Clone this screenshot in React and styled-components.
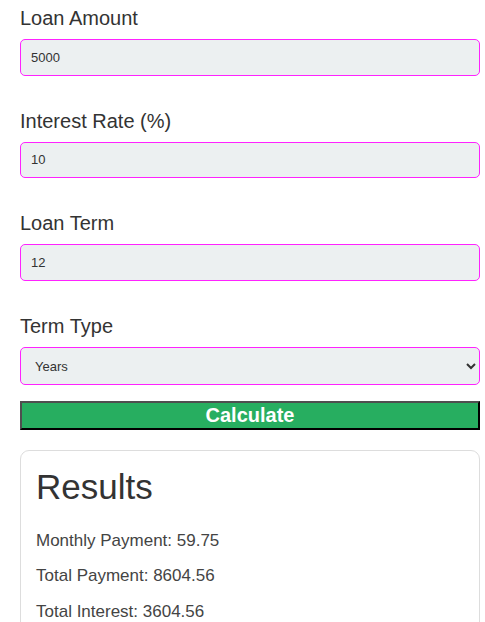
import React, { useState } from "react";
import styled, { createGlobalStyle } from "styled-components";

const Global = createGlobalStyle`
  html, body { margin: 0; padding: 0; background: #ffffff; }
  body { font-family: "Liberation Sans", Arial, sans-serif; }
  * { box-sizing: border-box; }
`;

const Page = styled.div`
  width: 460px;
  margin-left: 20px;
  padding-top: 7px;
`;

const Form = styled.div`
  display: flex;
  flex-direction: column;
  gap: 34px;
`;

const Field = styled.div`
  display: flex;
  flex-direction: column;
  gap: 9px;
`;

const Label = styled.label`
  font-size: 20px;
  line-height: 23px;
  color: #333333;
`;

const Input = styled.input`
  width: 100%;
  height: 36.5px;
  padding: 10px;
  font-family: "Liberation Sans", Arial, sans-serif;
  font-size: 13px;
  color: #333333;
  background: #ecf0f1;
  border: 1px solid #ff22ff;
  border-radius: 5px;
  outline: none;
`;

const Select = styled.select`
  width: 100%;
  height: 38px;
  padding: 10px;
  font-family: "Liberation Sans", Arial, sans-serif;
  font-size: 13px;
  color: #333333;
  background: #ecf0f1;
  border: 1px solid #ff22ff;
  border-radius: 5px;
  outline: none;
`;

const Button = styled.button`
  display: block;
  width: 100%;
  margin-top: 16px;
  padding: 1px 6px;
  font-family: "Liberation Sans", Arial, sans-serif;
  font-size: 20px;
  font-weight: bold;
  line-height: 23px;
  color: #ffffff;
  background: #27ae60;
  border-style: solid;
  border-width: 2px;
  border-color: #4f4f4f #000000 #000000 #4f4f4f;
  cursor: pointer;
`;

const Card = styled.div`
  margin-top: 20px;
  padding: 16px 15px;
  border: 1px solid #dddddd;
  border-radius: 9px;
  background: #ffffff;
`;

const Title = styled.h2`
  margin: 0 0 24px;
  font-size: 35px;
  font-weight: normal;
  color: #333333;
`;

const Line = styled.p`
  margin: 15.5px 0;
  font-size: 17px;
  color: #444444;
`;

export default function App() {
  const [amount, setAmount] = useState("5000");
  const [rate, setRate] = useState("10");
  const [term, setTerm] = useState("12");
  const [type, setType] = useState("years");

  return (
    <>
      <Global />
      <Page>
        <Form>
          <Field>
            <Label>Loan Amount</Label>
            <Input value={amount} onChange={(e) => setAmount(e.target.value)} />
          </Field>
          <Field>
            <Label>Interest Rate (%)</Label>
            <Input value={rate} onChange={(e) => setRate(e.target.value)} />
          </Field>
          <Field>
            <Label>Loan Term</Label>
            <Input value={term} onChange={(e) => setTerm(e.target.value)} />
          </Field>
          <Field>
            <Label>Term Type</Label>
            <Select value={type} onChange={(e) => setType(e.target.value)}>
              <option value="years">Years</option>
              <option value="months">Months</option>
            </Select>
          </Field>
        </Form>
        <Button>Calculate</Button>
        <Card>
          <Title>Results</Title>
          <Line>Monthly Payment: 59.75</Line>
          <Line>Total Payment: 8604.56</Line>
          <Line>Total Interest: 3604.56</Line>
        </Card>
      </Page>
    </>
  );
}
